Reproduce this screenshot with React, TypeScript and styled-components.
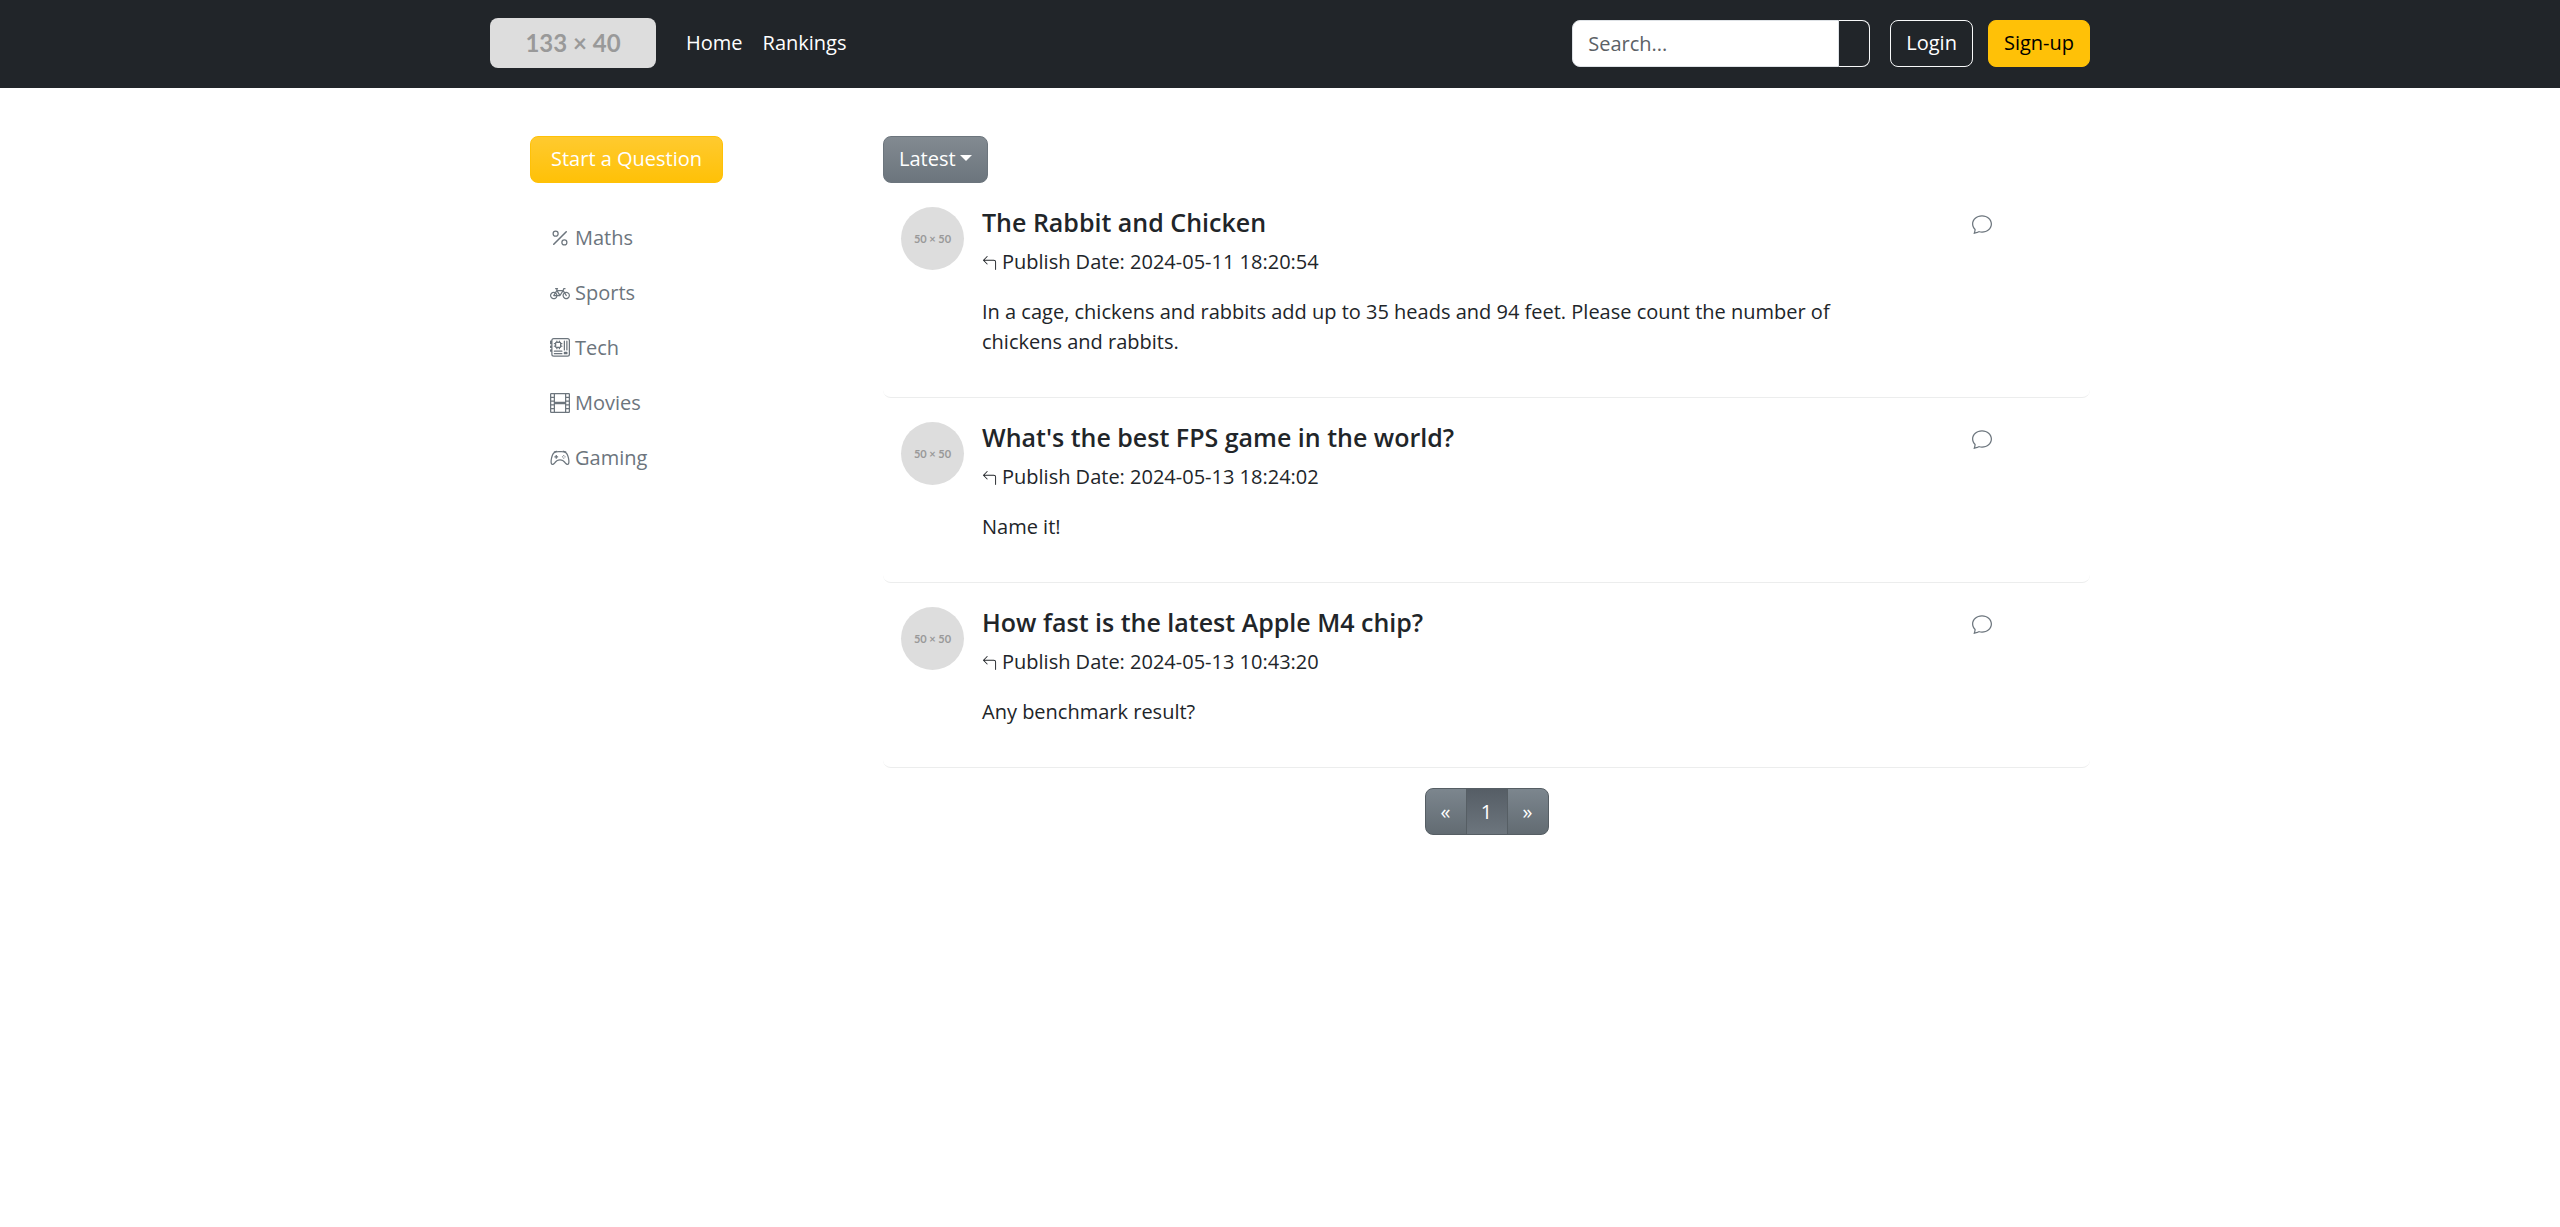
import React from 'react';
import styled, { createGlobalStyle } from 'styled-components';
import {
  BsPercent,
  BsBicycle,
  BsMotherboard,
  BsFilm,
  BsController,
  BsChat,
  BsArrow90DegLeft,
} from 'react-icons/bs';

const GlobalStyle = createGlobalStyle`
  *, *::before, *::after { box-sizing: border-box; }
  body {
    margin: 0;
    background: #fff;
    color: #212529;
    font-family: "Open Sans", "Noto Sans", sans-serif;
    font-size: 20px;
    line-height: 30px;
  }
  button, input, select { font: inherit; }
`;

const Header = styled.header`
  background: #212529;
  padding: 18px 0 20px 20px;
`;

const HeaderInner = styled.div`
  max-width: 1600px;
  margin: 0 auto;
  display: flex;
  align-items: center;
`;

const Logo = styled.a`
  display: flex;
  align-items: center;
  justify-content: center;
  width: 166px;
  height: 50px;
  border-radius: 8px;
  background: #ddd;
  color: #999;
  font-family: Lato, sans-serif;
  font-size: 24px;
  font-weight: 700;
  text-decoration: none;
`;

const Nav = styled.nav`
  display: flex;
  flex: 1;
  margin-left: 20px;
`;

const NavLink = styled.a`
  padding: 8px 10px;
  color: #fff;
  text-decoration: none;
`;

const Search = styled.form`
  display: flex;
  width: 298px;
  margin-right: 20px;
`;

const SearchInput = styled.input`
  flex: 1;
  min-width: 0;
  height: 47px;
  padding: 0 15px;
  border: 1px solid #dee2e6;
  border-radius: 8px 0 0 8px;
  background: #fff;
  color: #212529;
  &::placeholder { color: #5c6166; opacity: 1; }
`;

const SearchButton = styled.button`
  width: 31px;
  height: 47px;
  padding: 0;
  border: 1px solid #f8f9fa;
  border-left: 0;
  border-radius: 0 8px 8px 0;
  background: transparent;
`;

const Button = styled.button<{ $look: 'outline' | 'warning' | 'gradient' }>`
  height: 47px;
  padding: ${(p) => (p.$look === 'gradient' ? '0 20px 2px' : '0 15px')};
  border: 1px solid ${(p) => (p.$look === 'outline' ? '#f8f9fa' : '#ffc107')};
  border-radius: 8px;
  color: ${(p) => (p.$look === 'warning' ? '#000' : '#fff')};
  background: ${(p) =>
    ({
      outline: 'transparent',
      warning: '#ffc107',
      gradient: 'linear-gradient(180deg, #ffca2f, #ffc107)',
    })[p.$look]};
  cursor: pointer;
`;

const Account = styled.div`
  display: flex;
  gap: 15px;
`;

const PageBody = styled.div`
  padding: 48px 0 40px 20px;
`;

const Page = styled.div`
  max-width: 1600px;
  margin: 0 auto;
  display: grid;
  grid-template-columns: 393px minmax(0, 1fr);
`;

const Sidebar = styled.aside`
  padding-left: 40px;
`;

const Topics = styled.ul`
  list-style: none;
  margin: 27px 0 0;
  padding: 0;
`;

const TopicLink = styled.a`
  display: flex;
  align-items: center;
  gap: 5px;
  height: 55px;
  padding-left: 20px;
  color: #6c757d;
  text-decoration: none;
`;

const Sort = styled.div`
  display: grid;
  align-items: center;
  width: 105px;
  height: 47px;
  border: 1px solid #6c757d;
  border-radius: 8px;
  background: linear-gradient(180deg, #828a91, #6c757d);
  &::after {
    content: '';
    grid-area: 1 / 1;
    justify-self: end;
    margin: 0 15px 3px 0;
    border: 6px solid transparent;
    border-top-color: #fff;
    border-bottom: 0;
    pointer-events: none;
  }
`;

const SortSelect = styled.select`
  grid-area: 1 / 1;
  appearance: none;
  width: 100%;
  height: 45px;
  padding: 0 0 2px 15px;
  border: 0;
  background: transparent;
  color: #fff;
  option { color: #212529; }
`;

const Question = styled.article`
  display: grid;
  grid-template-columns: 99px 9fr 2fr;
  padding: 24px 8px 40px 0;
  border-bottom: 1px solid #eceded;
  border-radius: 8px;
`;

const Avatar = styled.div`
  display: flex;
  align-items: center;
  justify-content: center;
  width: 63px;
  height: 63px;
  margin-left: 18px;
  border-radius: 50%;
  background: #ddd;
  color: #999;
  font-family: Lato, sans-serif;
  font-size: 11px;
  font-weight: 700;
`;

const Title = styled.h5`
  margin: 0 0 10px;
  font-size: 25px;
  line-height: 30px;
  font-weight: 600;
`;

const TitleLink = styled.a`
  color: #212529;
  text-decoration: none;
`;

const Published = styled.div`
  display: flex;
  align-items: center;
  gap: 5px;
  svg { margin-top: 2px; }
`;

const Excerpt = styled.p`
  margin: 20px 0 0;
`;

const Comments = styled.a`
  justify-self: center;
  align-self: start;
  display: flex;
  padding-top: 7px;
  color: #6c757d;
`;

const Pagination = styled.nav`
  display: flex;
  justify-content: center;
  margin-top: 20px;
`;

const PageButton = styled.button<{ $active?: boolean }>`
  width: 42px;
  height: 47px;
  padding: 0;
  border: 1px solid #565e64;
  background: ${(p) =>
    p.$active
      ? 'linear-gradient(180deg, #565e66, #6c757d)'
      : 'linear-gradient(180deg, #7c868e, #626b72)'};
  color: #fff;
  & + & { margin-left: -1px; }
  &:first-child { border-radius: 8px 0 0 8px; }
  &:last-child { border-radius: 0 8px 8px 0; }
`;

const topics = [
  { name: 'Maths', Icon: BsPercent },
  { name: 'Sports', Icon: BsBicycle },
  { name: 'Tech', Icon: BsMotherboard },
  { name: 'Movies', Icon: BsFilm },
  { name: 'Gaming', Icon: BsController },
];

const questions = [
  {
    title: 'The Rabbit and Chicken',
    date: '2024-05-11 18:20:54',
    text: 'In a cage, chickens and rabbits add up to 35 heads and 94 feet. Please count the number of chickens and rabbits.',
  },
  {
    title: "What's the best FPS game in the world?",
    date: '2024-05-13 18:24:02',
    text: 'Name it!',
  },
  {
    title: 'How fast is the latest Apple M4 chip?',
    date: '2024-05-13 10:43:20',
    text: 'Any benchmark result?',
  },
];

export default function App() {
  return (
    <>
      <GlobalStyle />
      <Header>
        <HeaderInner>
          <Logo href="#">133 × 40</Logo>
          <Nav>
            <NavLink href="#">Home</NavLink>
            <NavLink href="#">Rankings</NavLink>
          </Nav>
          <Search role="search" onSubmit={(e) => e.preventDefault()}>
            <SearchInput type="search" placeholder="Search..." aria-label="Search" />
            <SearchButton type="submit" aria-label="Search" />
          </Search>
          <Account>
            <Button type="button" $look="outline">Login</Button>
            <Button type="button" $look="warning">Sign-up</Button>
          </Account>
        </HeaderInner>
      </Header>
      <PageBody>
        <Page>
          <Sidebar>
            <Button type="button" $look="gradient">Start a Question</Button>
            <Topics>
              {topics.map(({ name, Icon }) => (
                <li key={name}>
                  <TopicLink href="#">
                    <Icon size={20} />
                    {name}
                  </TopicLink>
                </li>
              ))}
            </Topics>
          </Sidebar>
          <main>
            <Sort>
              <SortSelect aria-label="Sort questions">
                <option>Latest</option>
              </SortSelect>
            </Sort>
            {questions.map((q) => (
              <Question key={q.title}>
                <Avatar>50 × 50</Avatar>
                <div>
                  <Title>
                    <TitleLink href="#">{q.title}</TitleLink>
                  </Title>
                  <Published>
                    <BsArrow90DegLeft size={15} />
                    Publish Date: {q.date}
                  </Published>
                  <Excerpt>{q.text}</Excerpt>
                </div>
                <Comments href="#" aria-label="Comments">
                  <BsChat size={20} />
                </Comments>
              </Question>
            ))}
            <Pagination aria-label="Pages">
              <PageButton type="button">«</PageButton>
              <PageButton type="button" $active>1</PageButton>
              <PageButton type="button">»</PageButton>
            </Pagination>
          </main>
        </Page>
      </PageBody>
    </>
  );
}
